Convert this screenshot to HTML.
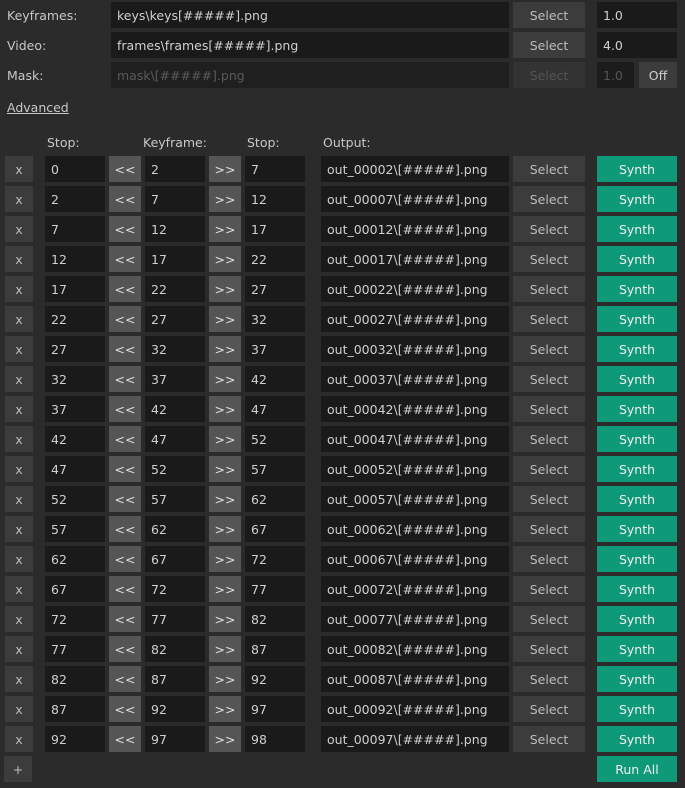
<!DOCTYPE html>
<html><head><meta charset="utf-8"><style>
html,body{margin:0;padding:0;background:#2b2b2b;width:685px;height:788px;overflow:hidden}
body{position:relative;font-family:"DejaVu Sans","Liberation Sans",sans-serif;font-size:12.5px;color:#cfcfcf}
.a{position:absolute;box-sizing:border-box;line-height:28px;height:26px;white-space:nowrap;overflow:hidden}
.in{background:#1a1a1a;padding-left:6px}
.bt{background:#3c3c3c;text-align:center;color:#bdbdbd}
.ar{background:#555;text-align:center;color:#e0e0e0}
.g{background:#0e9a78;text-align:center;color:#f0f0f0}
.l{color:#c8c8c8}
</style></head><body>
<div class="a l" style="left:7px;top:2px">Keyframes:</div>
<div class="a in" style="left:111px;top:2px;width:398px">keys\keys[#####].png</div>
<div class="a bt" style="left:513px;top:2px;width:72px">Select</div>
<div class="a in" style="left:597px;top:2px;width:80px">1.0</div>
<div class="a l" style="left:7px;top:32px">Video:</div>
<div class="a in" style="left:111px;top:32px;width:398px">frames\frames[#####].png</div>
<div class="a bt" style="left:513px;top:32px;width:72px">Select</div>
<div class="a in" style="left:597px;top:32px;width:80px">4.0</div>
<div class="a l" style="left:7px;top:62px">Mask:</div>
<div class="a in" style="left:111px;top:62px;width:398px;color:#5a5a5a;background:#1f1f1f">mask\[#####].png</div>
<div class="a bt" style="left:513px;top:62px;width:72px;color:#555;background:#333">Select</div>
<div class="a in" style="left:597px;top:62px;width:37px;color:#555;background:#1c1c1c">1.0</div>
<div class="a bt" style="left:639px;top:62px;width:38px;color:#d0d0d0">Off</div>
<div class="a l" style="left:7px;top:94px;text-decoration:underline">Advanced</div>
<div class="a l" style="left:47px;top:129px">Stop:</div>
<div class="a l" style="left:143px;top:129px">Keyframe:</div>
<div class="a l" style="left:247px;top:129px">Stop:</div>
<div class="a l" style="left:323px;top:129px">Output:</div>
<div id="rows"></div>
<div class="a bt" style="left:4px;top:756px;width:28px">+</div>
<div class="a g" style="left:597px;top:756px;width:80px">Run All</div>
<script>
var d=[[0,2,7],[2,7,12],[7,12,17],[12,17,22],[17,22,27],[22,27,32],[27,32,37],[32,37,42],[37,42,47],[42,47,52],[47,52,57],[52,57,62],[57,62,67],[62,67,72],[67,72,77],[72,77,82],[77,82,87],[82,87,92],[87,92,97],[92,97,98]];
var h='';
d.forEach(function(r,i){var y=156+i*30;var n=String(r[1]);while(n.length<5)n='0'+n;
h+='<div class="a bt" style="left:5px;top:'+y+'px;width:28px">x</div>'+
'<div class="a in" style="left:45px;top:'+y+'px;width:60px">'+r[0]+'</div>'+
'<div class="a ar" style="left:109px;top:'+y+'px;width:32px">&lt;&lt;</div>'+
'<div class="a in" style="left:145px;top:'+y+'px;width:60px">'+r[1]+'</div>'+
'<div class="a ar" style="left:209px;top:'+y+'px;width:32px">&gt;&gt;</div>'+
'<div class="a in" style="left:245px;top:'+y+'px;width:60px">'+r[2]+'</div>'+
'<div class="a in" style="left:321px;top:'+y+'px;width:188px">out_'+n+'\\[#####].png</div>'+
'<div class="a bt" style="left:513px;top:'+y+'px;width:72px">Select</div>'+
'<div class="a g" style="left:597px;top:'+y+'px;width:80px">Synth</div>';});
document.getElementById('rows').innerHTML=h;
</script>
</body></html>
